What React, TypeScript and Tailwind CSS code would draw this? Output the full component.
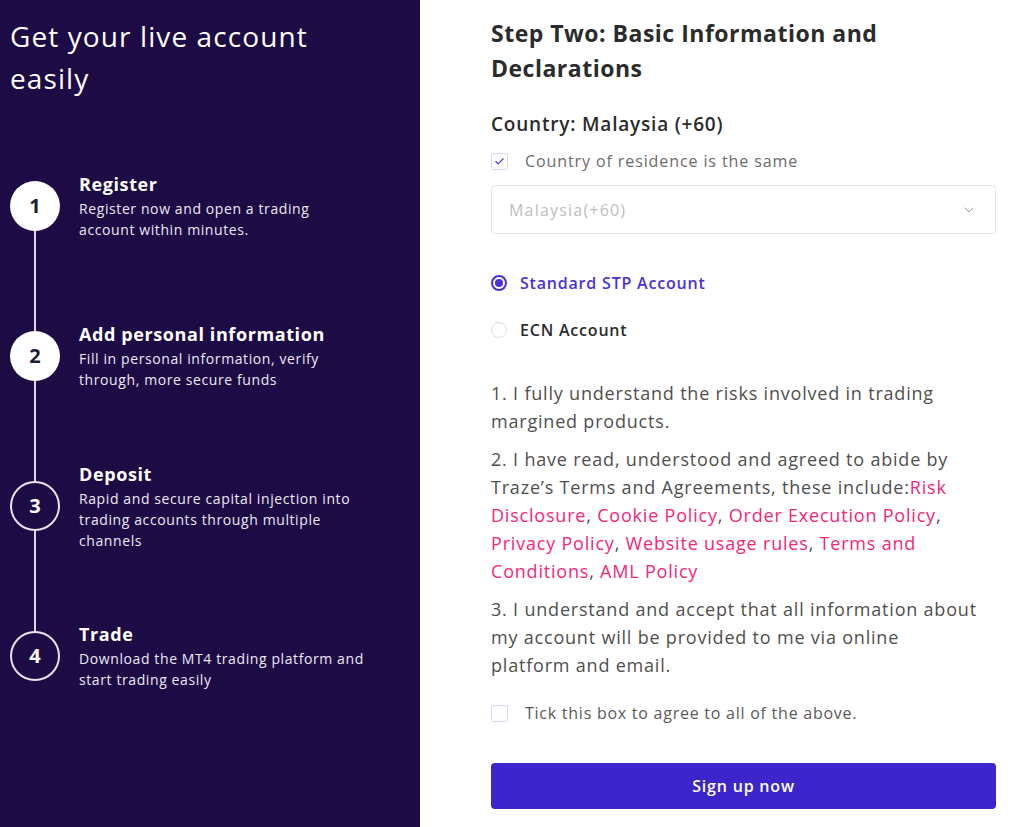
import React from "react";
import { ChevronDown, Check } from "lucide-react";

const steps = [
  {
    n: 1,
    title: "Register",
    desc: ["Register now and open a trading", "account within minutes."],
    done: true,
  },
  {
    n: 2,
    title: "Add personal information",
    desc: ["Fill in personal information, verify", "through, more secure funds"],
    done: true,
  },
  {
    n: 3,
    title: "Deposit",
    desc: [
      "Rapid and secure capital injection into",
      "trading accounts through multiple",
      "channels",
    ],
    done: false,
  },
  {
    n: 4,
    title: "Trade",
    desc: ["Download the MT4 trading platform and", "start trading easily"],
    done: false,
  },
];

const links = [
  "Risk Disclosure",
  "Cookie Policy",
  "Order Execution Policy",
  "Privacy Policy",
  "Website usage rules",
  "Terms and Conditions",
  "AML Policy",
];

export default function App() {
  const [same, setSame] = React.useState(true);
  const [agree, setAgree] = React.useState(false);
  const [account, setAccount] = React.useState<"stp" | "ecn">("stp");

  return (
    <div className="flex h-[827px] w-[1024px] overflow-hidden bg-white font-['Open_Sans',sans-serif]">
      <aside className="w-[420px] shrink-0 bg-[#1d0b45] pl-[10px] pt-[15px] text-white">
        <h1 className="text-[28px] font-normal leading-[42px] tracking-[1.1px]">
          Get your live account
          <br />
          easily
        </h1>

        <div className="relative mt-[32px]">
          <div className="absolute left-[24px] top-[75px] h-[450px] w-[2px] bg-[#d9d6e2]" />
          {steps.map((s) => (
            <div key={s.n} className="relative flex h-[150px] items-center gap-[19px]">
              <div
                className={
                  s.done
                    ? "z-10 flex h-[50px] w-[50px] shrink-0 items-center justify-center rounded-full bg-white text-[20px] font-bold text-[#1e1e2e]"
                    : "z-10 flex h-[50px] w-[50px] shrink-0 items-center justify-center rounded-full border-2 border-[#e6e3ee] bg-[#1d0b45] text-[20px] font-bold text-white"
                }
              >
                {s.n}
              </div>
              <div>
                <div className="text-[18px] font-bold leading-[24px] tracking-[0.6px]">{s.title}</div>
                <div className="mt-[2px] text-[14px] leading-[21px] tracking-[0.6px] text-[#ece9f4]">
                  {s.desc.map((d) => (
                    <div key={d}>{d}</div>
                  ))}
                </div>
              </div>
            </div>
          ))}
        </div>
      </aside>

      <main className="flex-1 pl-[71px] pr-[28px] pt-[16px] text-[#333]">
        <h2 className="text-[23px] font-bold leading-[35px] tracking-[0.5px] text-[#2b2b2b]">
          Step Two: Basic Information and
          <br />
          Declarations
        </h2>

        <div className="mt-[25px] text-[19px] font-semibold leading-[26px] tracking-[0.8px] text-[#2b2b2b]">
          Country: Malaysia (+60)
        </div>

        <label className="mt-[13px] flex h-[22px] cursor-pointer items-center gap-[17px]">
          <span
            onClick={() => setSame(!same)}
            className="flex h-[17px] w-[17px] items-center justify-center rounded-[3px] border border-[#d8d4f5] bg-white"
          >
            {same && <Check size={11} strokeWidth={2.5} className="text-[#4a32d6]" />}
          </span>
          <span className="text-[16px] tracking-[0.9px] text-[#6b6b6b]">Country of residence is the same</span>
        </label>

        <div className="mt-[13px] flex h-[49px] items-center justify-between rounded-[4px] border border-[#e6e6e6] pl-[17px] pr-[18px]">
          <span className="text-[16px] tracking-[1.2px] text-[#bdbdbd]">Malaysia(+60)</span>
          <ChevronDown size={16} strokeWidth={1.5} className="text-[#9a9a9a]" />
        </div>

        <div className="mt-[38px] flex flex-col gap-[25px]">
          <label
            className="flex h-[22px] cursor-pointer items-center gap-[13px]"
            onClick={() => setAccount("stp")}
          >
            <span
              className={
                account === "stp"
                  ? "flex h-[16px] w-[16px] items-center justify-center rounded-full border-2 border-[#4a32d6]"
                  : "h-[16px] w-[16px] rounded-full border border-[#dcdcdc]"
              }
            >
              {account === "stp" && <span className="h-[8px] w-[8px] rounded-full bg-[#4a32d6]" />}
            </span>
            <span
              className={
                account === "stp"
                  ? "text-[16px] font-semibold tracking-[0.8px] text-[#4a32d6]"
                  : "text-[16px] font-semibold tracking-[0.8px] text-[#2b2b2b]"
              }
            >
              Standard STP Account
            </span>
          </label>
          <label
            className="flex h-[22px] cursor-pointer items-center gap-[13px]"
            onClick={() => setAccount("ecn")}
          >
            <span
              className={
                account === "ecn"
                  ? "flex h-[16px] w-[16px] items-center justify-center rounded-full border-2 border-[#4a32d6]"
                  : "h-[16px] w-[16px] rounded-full border border-[#dcdcdc]"
              }
            >
              {account === "ecn" && <span className="h-[8px] w-[8px] rounded-full bg-[#4a32d6]" />}
            </span>
            <span
              className={
                account === "ecn"
                  ? "text-[16px] font-semibold tracking-[0.8px] text-[#4a32d6]"
                  : "text-[16px] font-semibold tracking-[0.8px] text-[#2b2b2b]"
              }
            >
              ECN Account
            </span>
          </label>
        </div>

        <div className="mt-[38px] flex flex-col gap-[10px] text-[18px] leading-[28px] tracking-[0.8px] text-[#4f4f4f]">
          <p>1. I fully understand the risks involved in trading margined products.</p>
          <p>
            2. I have read, understood and agreed to abide by Traze’s Terms and Agreements, these
            include:
            {links.map((l, i) => (
              <React.Fragment key={l}>
                <a href="#" className="text-[#f5267a]">
                  {l}
                </a>
                {i < links.length - 1 ? ", " : ""}
              </React.Fragment>
            ))}
          </p>
          <p>
            3. I understand and accept that all information about my account will be provided to me
            via online
            <br />
            platform and email.
          </p>
        </div>

        <label className="mt-[23px] flex h-[22px] cursor-pointer items-center gap-[17px]">
          <span
            onClick={() => setAgree(!agree)}
            className="flex h-[17px] w-[17px] items-center justify-center rounded-[3px] border border-[#d8d4f5] bg-white"
          >
            {agree && <Check size={11} strokeWidth={2.5} className="text-[#4a32d6]" />}
          </span>
          <span className="text-[16px] tracking-[0.75px] text-[#5a5a5a]">
            Tick this box to agree to all of the above.
          </span>
        </label>

        <button className="mt-[39px] flex h-[46px] w-full items-center justify-center rounded-[4px] bg-[#3c25cb] text-[16px] font-semibold tracking-[0.8px] text-white">
          Sign up now
        </button>
      </main>
    </div>
  );
}
